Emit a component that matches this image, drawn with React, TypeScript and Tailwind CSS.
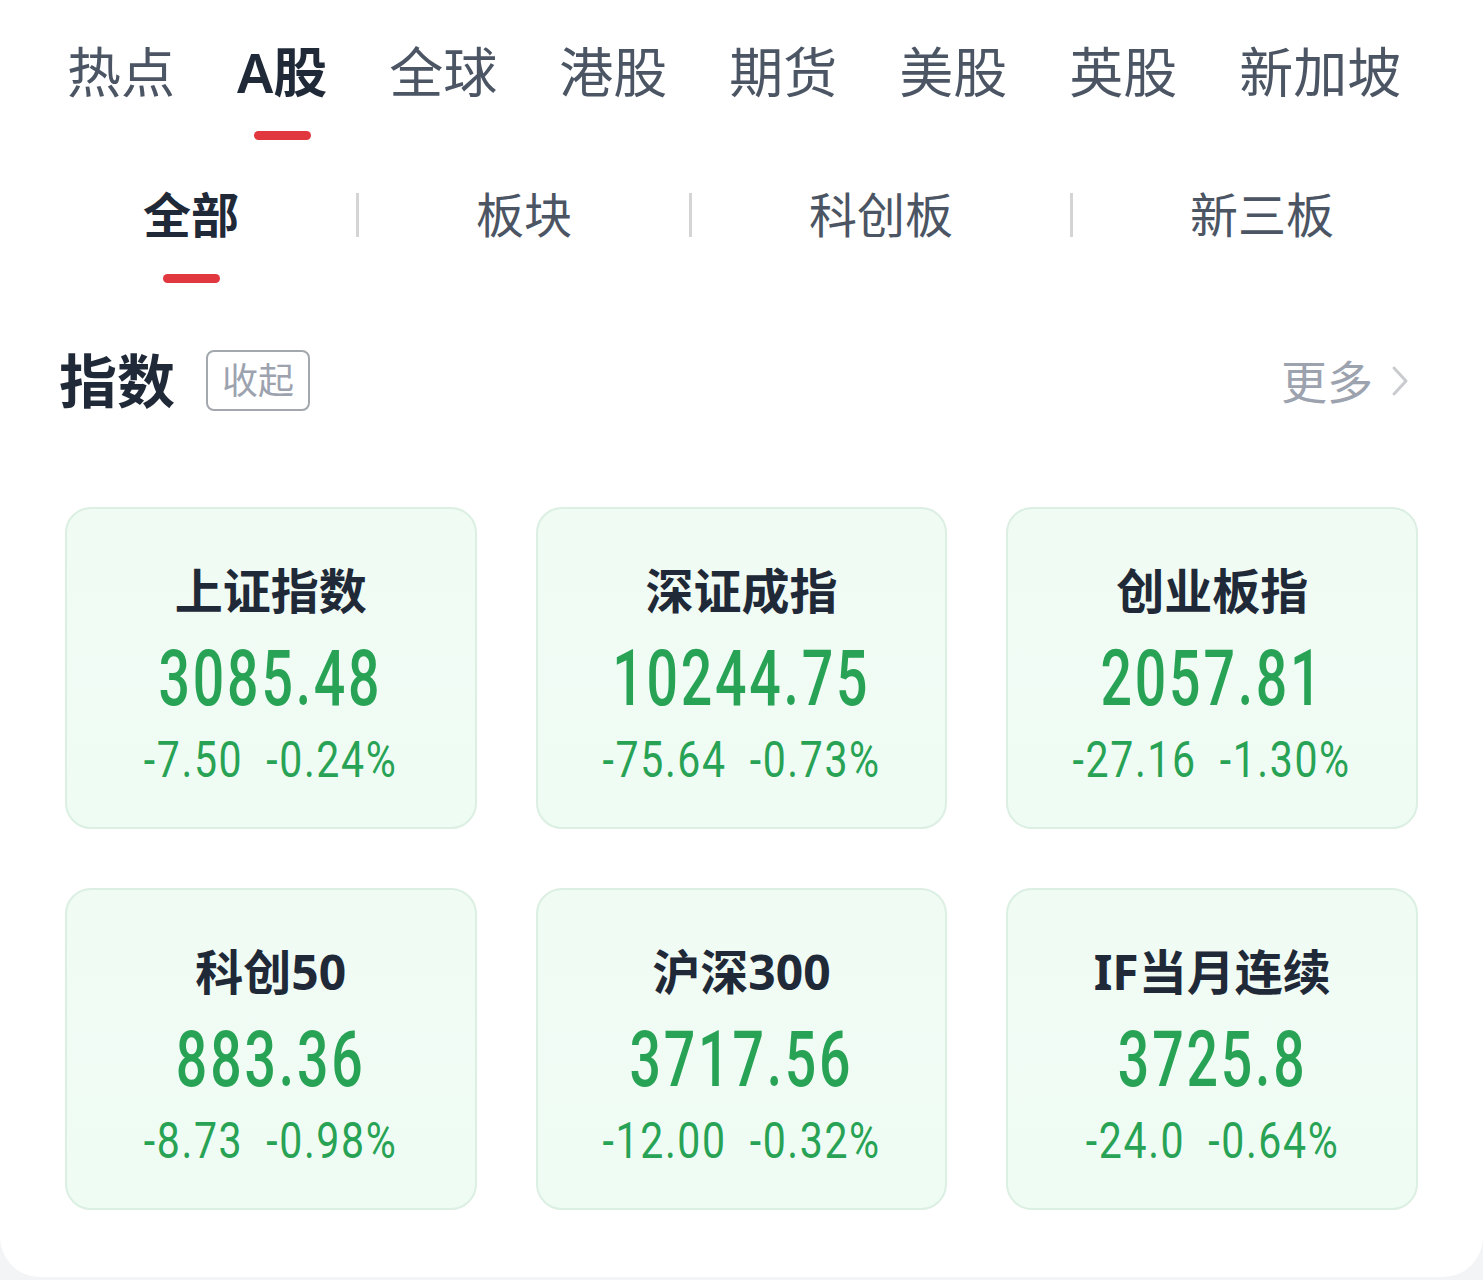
import React from "react";

const CJK = '"Noto Sans", "Noto Sans CJK SC", sans-serif';
const NUM = 'Roboto, "Noto Sans", sans-serif';

const topTabs = ["热点", "A股", "全球", "港股", "期货", "美股", "英股", "新加坡"];
const subTabs = ["全部", "板块", "科创板", "新三板"];

const cards = [
  { name: "上证指数", value: "3085.48", chg: "-7.50", pct: "-0.24%" },
  { name: "深证成指", value: "10244.75", chg: "-75.64", pct: "-0.73%" },
  { name: "创业板指", value: "2057.81", chg: "-27.16", pct: "-1.30%" },
  { name: "科创50", value: "883.36", chg: "-8.73", pct: "-0.98%" },
  { name: "沪深300", value: "3717.56", chg: "-12.00", pct: "-0.32%" },
  { name: "IF当月连续", value: "3725.8", chg: "-24.0", pct: "-0.64%" },
];

export default function App() {
  return (
    <div className="min-h-[1280px] w-[1483px] bg-[#f3f4f6]" style={{ fontFamily: CJK }}>
      <div className="h-[1277px] bg-white rounded-b-[40px] overflow-hidden">
        {/* top tabs */}
        <div className="flex items-start gap-[62px] pl-[67px] pt-[45px]">
          {topTabs.map((t, i) => (
            <div key={t} className="flex flex-col items-center">
              <span
                className={
                  "text-[54px] leading-none whitespace-nowrap " +
                  (i === 1 ? "text-[#1f2937] font-semibold" : "text-[#4b5563]")
                }
              >
                {t}
              </span>
              {i === 1 ? (
                <div className="mt-[32px] h-[9px] w-[57px] rounded-full bg-[#e0383e]" />
              ) : null}
            </div>
          ))}
        </div>

        {/* sub tabs */}
        <div className="flex items-start pl-[143px] mt-[51px]">
          {subTabs.map((t, i) => (
            <React.Fragment key={t}>
              {i > 0 ? (
                <div className="mx-[117px] mt-[2px] h-[44px] w-[3px] bg-[#d4d4d4]" />
              ) : null}
              <div className="flex flex-col items-center">
                <span
                  className={
                    "text-[48px] leading-none whitespace-nowrap " +
                    (i === 0 ? "text-[#1f2937] font-semibold" : "text-[#4b5563]")
                  }
                >
                  {t}
                </span>
                {i === 0 ? (
                  <div className="mt-[35px] h-[9px] w-[57px] rounded-full bg-[#e0383e]" />
                ) : null}
              </div>
            </React.Fragment>
          ))}
        </div>

        {/* section header */}
        <div className="flex items-center justify-between pl-[59px] pr-[74px] mt-[67px] h-[61px]">
          <div className="flex items-center gap-[31px]">
            <span className="text-[58px] leading-none font-bold text-[#1f2937]">指数</span>
            <span className="flex h-[61px] w-[104px] items-center justify-center rounded-[8px] border-2 border-[#a3a8ae] text-[36px] leading-none text-[#9ca3af]">
              收起
            </span>
          </div>
          <div className="flex items-center gap-[18px]">
            <span className="text-[46px] leading-none text-[#9ca3af]">更多</span>
            <svg width="18" height="32" viewBox="0 0 18 32" fill="none">
              <path d="M3 3 L15 16 L3 29" stroke="#c9cbcf" strokeWidth="3" strokeLinecap="round" strokeLinejoin="round" />
            </svg>
          </div>
        </div>

        {/* cards */}
        <div className="grid grid-cols-3 gap-x-[59px] gap-y-[59px] pl-[65px] pr-[65px] mt-[96px]">
          {cards.map((c) => (
            <div
              key={c.name}
              className="flex h-[322px] flex-col items-center rounded-[26px] border-2 border-[#dcefe3] bg-gradient-to-b from-[#f0fbf4] to-[#effcf4] pt-[58px]"
            >
              <div className="text-[48px] leading-none font-bold text-[#1f2937] whitespace-nowrap">{c.name}</div>
              <div
                className="mt-[26px] text-[77px] leading-none font-medium tracking-[0.05em] text-[#28a355] scale-x-[0.72] whitespace-nowrap"
                style={{ fontFamily: NUM }}
              >
                {c.value}
              </div>
              <div
                className="mt-[17px] flex gap-[28px] text-[50px] leading-none tracking-[0.04em] text-[#28a355] scale-x-[0.82] whitespace-nowrap"
                style={{ fontFamily: NUM }}
              >
                <span>{c.chg}</span>
                <span>{c.pct}</span>
              </div>
            </div>
          ))}
        </div>
      </div>
    </div>
  );
}
